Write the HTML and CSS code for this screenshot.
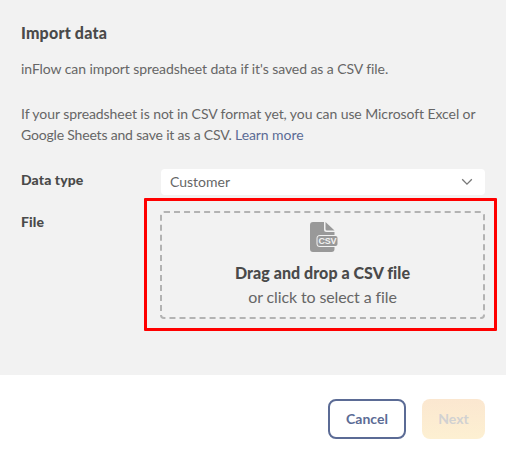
FILE: index.html
```html
<!DOCTYPE html>
<html lang="en">
<head>
<meta charset="utf-8">
<title>Import data</title>
<link rel="stylesheet" href="styles.css">
</head>
<body>
<main class="panel">
  <h1 class="title">Import data</h1>
  <p class="text">inFlow can import spreadsheet data if it's saved as a CSV file.</p>
  <p class="text">If your spreadsheet is not in CSV format yet, you can use Microsoft Excel or <span class="tight">Google Sheets and save it as a CSV. </span><a class="link">Learn more</a></p>
  <div class="form">
    <div class="label">Data type</div>
    <div class="select">
      <span>Customer</span>
      <svg width="12" height="8" viewBox="0 0 12 8" fill="none" stroke="#777" stroke-width="1.3"><path d="M1.2 1.3 6 6.1l4.8-4.8"/></svg>
    </div>
    <div class="label">File</div>
    <div class="dropzone">
      <svg class="file-icon" width="28" height="30" viewBox="0 0 28 30">
        <path fill="#999" d="M3 0h11v7.500q0 2.500 2.500 2.500H24.500v3H10q-3.500 0-3.500 3.500v5q0 3.500 3.500 3.500h14.500v2q0 3-3 3H3q-3 0-3-3V3q0-3 3-3z"/>
        <path fill="#999" d="M15.500 0 24.500 8.500H17q-1.500 0-1.500-1.500z"/>
        <rect x="7.500" y="14" width="20" height="10" rx="2" fill="#999"/>
        <text class="icon-text" x="17.500" y="22" text-anchor="middle" textLength="18">CSV</text>
      </svg>
      <strong class="drop-title">Drag and drop a CSV file</strong>
      <span class="drop-text">or click to select a file</span>
      <div class="highlight"></div>
    </div>
  </div>
</main>
<footer class="actions">
  <button class="button cancel">Cancel</button>
  <button class="button next" disabled>Next</button>
</footer>
</body>
</html>
```
FILE: styles.css
```css
* { box-sizing: border-box; }
body {
  margin: 0;
  background: #fff;
  color: #666;
  font: 14px/21px Lato, "Liberation Sans", sans-serif;
}
.panel {
  height: 375px;
  padding: 21px 21px 0;
  background: #f2f2f2;
}
.title {
  margin: 0 0 13px;
  color: #4a4a4a;
  font-size: 16px;
  line-height: 24px;
  font-weight: 900;
  letter-spacing: 0.2px;
}
.text {
  margin: 0 0 24px;
  letter-spacing: -0.075px;
}
.tight { letter-spacing: -0.18px; }
.link { color: #5b6b95; }
.form {
  display: grid;
  grid-template-columns: 139px 325px;
  row-gap: 16px;
}
.label {
  color: #4a4a4a;
  font-weight: 900;
  letter-spacing: 0.1px;
}
.select {
  display: flex;
  align-items: center;
  justify-content: space-between;
  height: 26px;
  margin-left: 1px;
  padding: 0 12px 0 9px;
  border-radius: 4px;
  background: #fff;
}
.select span { margin-top: -2px; }
.dropzone {
  position: relative;
  display: flex;
  flex-direction: column;
  align-items: center;
  height: 108px;
  padding-top: 9px;
  border: 2px dashed #b3b3b3;
  border-radius: 4px;
  font-size: 16px;
}
.file-icon { margin-left: 3px; }
.icon-text {
  fill: #f2f2f2;
  font: 700 9px "Liberation Sans", sans-serif;
}
.drop-title {
  margin-top: 9px;
  color: #4a4a4a;
  line-height: 24px;
  font-weight: 900;
  letter-spacing: 0.05px;
}
.drop-text {
  line-height: 24px;
  letter-spacing: -0.12px;
}
.highlight {
  position: absolute;
  inset: -15px -14px -14px -18px;
  border: 3px solid #f00;
  border-radius: 1px;
}
.actions {
  display: flex;
  justify-content: flex-end;
  gap: 16px;
  padding: 24px 21px 0;
}
.button {
  height: 40px;
  padding: 0 16px;
  border: 0;
  border-radius: 8px;
  font: 700 14px/20px Lato, "Liberation Sans", sans-serif;
}
.cancel {
  width: 78px;
  border: 2px solid #5b6b95;
  background: #fff;
  color: #5b6b95;
}
.next {
  width: 63px;
  background: linear-gradient(#fbe7d0, #fdf0d2);
  color: #d1d1d1;
}
```
